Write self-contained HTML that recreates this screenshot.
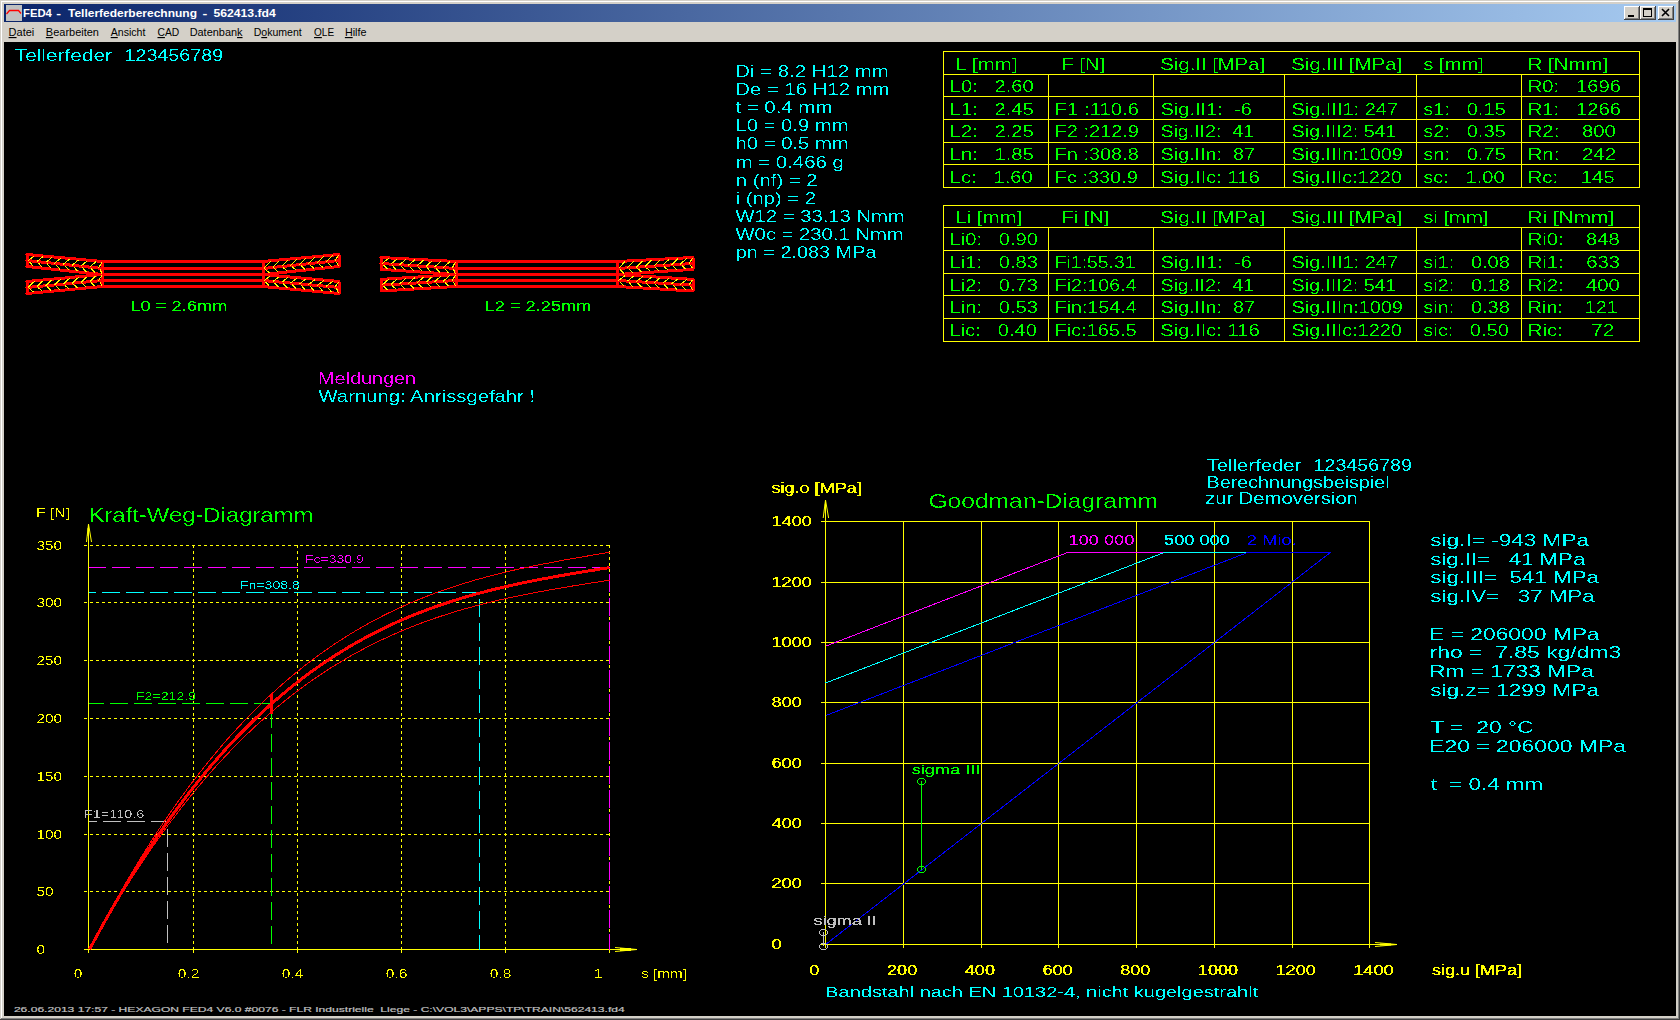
<!DOCTYPE html>
<html lang="de"><head><meta charset="utf-8"><title>FED4 - Tellerfederberechnung - 562413.fd4</title>
<style>
html,body{margin:0;padding:0;background:#d4d0c8;overflow:hidden}
svg{display:block;position:absolute;left:0;top:0}
text{font-family:"Liberation Sans",sans-serif;white-space:pre}
</style></head><body>
<svg width="1680" height="1020" viewBox="0 0 1680 1020" xml:space="preserve">

<defs><linearGradient id="tg" x1="0" x2="1" y1="0" y2="0"><stop offset="0" stop-color="#0a246a"/><stop offset="1" stop-color="#a6caf0"/></linearGradient></defs>
<rect x="0" y="0" width="1680" height="1020" fill="#d4d0c8"/>
<rect x="1" y="1" width="1677" height="1" fill="#ffffff"/><rect x="1" y="1" width="1" height="1017" fill="#ffffff"/>
<rect x="0" y="1019" width="1680" height="1" fill="#404040"/><rect x="1679" y="0" width="1" height="1020" fill="#404040"/>
<rect x="1" y="1018" width="1678" height="1" fill="#808080"/><rect x="1678" y="1" width="1" height="1018" fill="#808080"/>
<rect x="4" y="4" width="1672" height="18" fill="url(#tg)"/>
<rect x="6" y="5" width="16" height="16" fill="#c0c0c0"/>
<path d="M6.5,14 L9.5,10.5 H18.5 L21,13.5" stroke="#ff0000" stroke-width="1.3" fill="none"/>
<rect x="1624" y="6" width="16" height="14" fill="#404040"/>
<rect x="1624" y="6" width="15" height="13" fill="#ffffff"/>
<rect x="1625" y="7" width="14" height="12" fill="#808080"/>
<rect x="1625" y="7" width="13" height="11" fill="#d4d0c8"/>
<rect x="1640" y="6" width="16" height="14" fill="#404040"/>
<rect x="1640" y="6" width="15" height="13" fill="#ffffff"/>
<rect x="1641" y="7" width="14" height="12" fill="#808080"/>
<rect x="1641" y="7" width="13" height="11" fill="#d4d0c8"/>
<rect x="1658" y="6" width="16" height="14" fill="#404040"/>
<rect x="1658" y="6" width="15" height="13" fill="#ffffff"/>
<rect x="1659" y="7" width="14" height="12" fill="#808080"/>
<rect x="1659" y="7" width="13" height="11" fill="#d4d0c8"/>
<rect x="1628" y="15" width="6" height="2" fill="#000"/>
<rect x="1643.5" y="8.5" width="8" height="8" fill="none" stroke="#000" stroke-width="1"/><rect x="1643" y="8" width="9" height="2" fill="#000"/>
<path d="M1662,9 L1669,16 M1669,9 L1662,16" stroke="#000" stroke-width="1.6" fill="none"/>
<rect x="4" y="42" width="1672" height="974" fill="#000000"/>
<path d="M102.5,261.5 H263 M102.5,268.5 H263 M102.5,274.5 H263 M102.5,280.5 H263 M102.5,286.5 H263 M27,254.5 L102.5,261.5 M27,281.5 L102.5,274.5 M339,254.5 L263,261.5 M339,281.5 L263,274.5 M27,260.5 L102.5,268.5 M27,287.5 L102.5,280.5 M339,260.5 L263,268.5 M339,287.5 L263,280.5 M27,266.5 L102.5,274.5 M27,293.5 L102.5,286.5 M339,266.5 L263,274.5 M339,293.5 L263,286.5 M27,254.5 V266.5 M27,281.5 V293.5 M339,254.5 V266.5 M339,281.5 V293.5 M102.5,261.5 V286.5 M263,261.5 V286.5" stroke="#ff0000" stroke-width="3" fill="none" stroke-linecap="round" stroke-linejoin="round" shape-rendering="crispEdges"/>
<path d="M28.0,260.6 L34.5,255.7 M29.5,262.0 L33.5,266.4 M36.8,261.5 L43.3,256.5 M38.3,262.9 L42.3,267.3 M45.6,262.5 L52.1,257.3 M47.1,263.8 L51.1,268.3 M54.4,263.4 L60.9,258.1 M55.9,264.8 L59.9,269.2 M63.2,264.3 L69.8,259.0 M64.8,265.7 L68.8,270.1 M72.1,265.3 L78.6,259.8 M73.6,266.6 L77.6,271.1 M80.9,266.2 L87.4,260.6 M82.4,267.6 L86.4,272.0 M89.7,267.1 L96.2,261.4 M91.2,268.5 L95.2,272.9 M98.5,268.1 L102.0,262.0 M100.0,269.4 L102.0,273.6 M28.0,287.4 L34.5,281.3 M29.5,288.5 L33.5,292.1 M36.8,286.6 L43.3,280.5 M38.3,287.7 L42.3,291.3 M45.6,285.8 L52.1,279.7 M47.1,286.8 L51.1,290.5 M54.4,285.0 L60.9,278.9 M55.9,286.0 L59.9,289.6 M63.2,284.1 L69.8,278.0 M64.8,285.2 L68.8,288.8 M72.1,283.3 L78.6,277.2 M73.6,284.4 L77.6,288.0 M80.9,282.5 L87.4,276.4 M82.4,283.6 L86.4,287.2 M89.7,281.7 L96.2,275.6 M91.2,282.7 L95.2,286.4 M98.5,280.9 L102.0,275.0 M100.0,281.9 L102.0,285.7 M264.0,268.4 L270.5,261.3 M265.5,269.4 L269.5,273.0 M272.9,267.5 L279.4,260.5 M274.4,268.5 L278.4,272.1 M281.8,266.5 L288.2,259.7 M283.2,267.6 L287.2,271.1 M290.6,265.6 L297.1,258.9 M292.1,266.6 L296.1,270.2 M299.5,264.7 L306.0,258.0 M301.0,265.7 L305.0,269.3 M308.4,263.7 L314.9,257.2 M309.9,264.8 L313.9,268.3 M317.2,262.8 L323.8,256.4 M318.8,263.8 L322.8,267.4 M326.1,261.9 L332.6,255.6 M327.6,262.9 L331.6,266.5 M335.0,260.9 L338.5,255.0 M336.5,262.0 L338.5,265.8 M264.0,280.6 L270.5,275.7 M265.5,281.9 L269.5,286.3 M272.9,281.4 L279.4,276.5 M274.4,282.7 L278.4,287.1 M281.8,282.2 L288.2,277.3 M283.2,283.6 L287.2,287.9 M290.6,283.0 L297.1,278.1 M292.1,284.4 L296.1,288.8 M299.5,283.9 L306.0,279.0 M301.0,285.2 L305.0,289.6 M308.4,284.7 L314.9,279.8 M309.9,286.0 L313.9,290.4 M317.2,285.5 L323.8,280.6 M318.8,286.8 L322.8,291.2 M326.1,286.3 L332.6,281.4 M327.6,287.7 L331.6,292.0 M335.0,287.1 L338.5,282.0 M336.5,288.5 L338.5,292.7" stroke="#ffff00" stroke-width="1" fill="none" shape-rendering="crispEdges"/>
<path d="M456,261.5 H617.5 M456,268.5 H617.5 M456,274.5 H617.5 M456,280.5 H617.5 M456,286.5 H617.5 M381,257.5 L456,261.5 M381,279.4 L456,274.5 M693,257.5 L617.5,261.5 M693,279.4 L617.5,274.5 M381,263.5 L456,268.5 M381,285.2 L456,280.5 M693,263.5 L617.5,268.5 M693,285.2 L617.5,280.5 M381,269.3 L456,274.5 M381,291 L456,286.5 M693,269.3 L617.5,274.5 M693,291 L617.5,286.5 M381,257.5 V269.3 M381,279.4 V291 M693,257.5 V269.3 M693,279.4 V291 M456,261.5 V286.5 M617.5,261.5 V286.5" stroke="#ff0000" stroke-width="3" fill="none" stroke-linecap="round" stroke-linejoin="round" shape-rendering="crispEdges"/>
<path d="M382.0,263.6 L388.5,258.4 M383.5,264.9 L387.5,269.0 M390.8,264.1 L397.2,258.9 M392.2,265.4 L396.2,269.6 M399.5,264.7 L406.0,259.3 M401.0,266.0 L405.0,270.2 M408.2,265.3 L414.8,259.8 M409.8,266.6 L413.8,270.8 M417.0,265.9 L423.5,260.3 M418.5,267.2 L422.5,271.4 M425.8,266.5 L432.2,260.7 M427.2,267.8 L431.2,272.0 M434.5,267.1 L441.0,261.2 M436.0,268.4 L440.0,272.6 M443.2,267.6 L449.8,261.7 M444.8,268.9 L448.8,273.2 M452.0,268.2 L455.5,262.0 M453.5,269.5 L455.5,273.7 M382.0,285.1 L388.5,279.4 M383.5,286.2 L387.5,289.8 M390.8,284.6 L397.2,278.8 M392.2,285.7 L396.2,289.3 M399.5,284.0 L406.0,278.3 M401.0,285.1 L405.0,288.8 M408.2,283.5 L414.8,277.7 M409.8,284.6 L413.8,288.2 M417.0,282.9 L423.5,277.1 M418.5,284.1 L422.5,287.7 M425.8,282.4 L432.2,276.6 M427.2,283.5 L431.2,287.2 M434.5,281.8 L441.0,276.0 M436.0,283.0 L440.0,286.7 M443.2,281.3 L449.8,275.4 M444.8,282.4 L448.8,286.1 M452.0,280.8 L455.5,275.0 M453.5,281.9 L455.5,285.7 M618.5,268.4 L625.0,261.6 M620.0,269.5 L624.0,273.3 M627.3,267.9 L633.8,261.1 M628.8,269.0 L632.8,272.6 M636.1,267.3 L642.6,260.7 M637.6,268.4 L641.6,272.0 M644.9,266.7 L651.4,260.2 M646.4,267.8 L650.4,271.4 M653.8,266.1 L660.2,259.7 M655.2,267.2 L659.2,270.8 M662.6,265.5 L669.1,259.3 M664.1,266.6 L668.1,270.2 M671.4,264.9 L677.9,258.8 M672.9,266.0 L676.9,269.6 M680.2,264.3 L686.7,258.3 M681.7,265.4 L685.7,269.0 M689.0,263.8 L692.5,258.0 M690.5,264.9 L692.5,268.5 M618.5,280.6 L625.0,275.5 M620.0,281.9 L624.0,286.1 M627.3,281.1 L633.8,276.1 M628.8,282.4 L632.8,286.6 M636.1,281.7 L642.6,276.6 M637.6,283.0 L641.6,287.1 M644.9,282.2 L651.4,277.2 M646.4,283.5 L650.4,287.7 M653.8,282.8 L660.2,277.8 M655.2,284.1 L659.2,288.2 M662.6,283.3 L669.1,278.3 M664.1,284.6 L668.1,288.7 M671.4,283.9 L677.9,278.9 M672.9,285.1 L676.9,289.2 M680.2,284.4 L686.7,279.5 M681.7,285.7 L685.7,289.8 M689.0,285.0 L692.5,279.9 M690.5,286.2 L692.5,290.2" stroke="#ffff00" stroke-width="1" fill="none" shape-rendering="crispEdges"/>
<path d="M943.5,51.5 H1639.5 M943.5,74.5 H1639.5 M943.5,96.5 H1639.5 M943.5,119.5 H1639.5 M943.5,142.5 H1639.5 M943.5,164.5 H1639.5 M943.5,187.5 H1639.5 M943.5,51.5 V187.5 M1639.5,51.5 V187.5 M1048.5,74.5 V187.5 M1153.5,74.5 V187.5 M1284.5,74.5 V187.5 M1416.5,74.5 V187.5 M1521.5,74.5 V187.5" stroke="#ffff00" stroke-width="1" fill="none" shape-rendering="crispEdges" stroke-linecap="square"/>
<path d="M943.5,205.5 H1639.5 M943.5,227.5 H1639.5 M943.5,250.5 H1639.5 M943.5,273.5 H1639.5 M943.5,295.5 H1639.5 M943.5,318.5 H1639.5 M943.5,341.5 H1639.5 M943.5,205.5 V341.5 M1639.5,205.5 V341.5 M1048.5,227.5 V341.5 M1153.5,227.5 V341.5 M1284.5,227.5 V341.5 M1416.5,227.5 V341.5 M1521.5,227.5 V341.5" stroke="#ffff00" stroke-width="1" fill="none" shape-rendering="crispEdges" stroke-linecap="square"/>
<path d="M84,891.5 H610 M84,834.5 H610 M84,776.5 H610 M84,718.5 H610 M84,660.5 H610 M84,602.5 H610 M84,545.5 H610" stroke="#ffff00" stroke-width="1" fill="none" stroke-dasharray="3 3" shape-rendering="crispEdges"/>
<path d="M193.5,545 V953 M297.5,545 V953 M401.5,545 V953 M505.5,545 V953 M609.5,545 V953" stroke="#ffff00" stroke-width="1" fill="none" stroke-dasharray="3 3" shape-rendering="crispEdges"/>
<path d="M193.5,949 V953 M297.5,949 V953 M401.5,949 V953 M505.5,949 V953 M609.5,949 V953" stroke="#ffff00" stroke-width="1" fill="none" shape-rendering="crispEdges"/>
<path d="M88.5,524 V953 M84,949.5 H637" stroke="#ffff00" stroke-width="1" fill="none" shape-rendering="crispEdges"/>
<path d="M88.5,524 L86.5,542 M88.5,524 L91.5,542 M88,528 V536" stroke="#ffff00" stroke-width="1" fill="none" />
<path d="M637,949.5 L615,947.5 M637,949.5 L615,951.5 M620,949.5 H632" stroke="#ffff00" stroke-width="1" fill="none" /><path d="M620,949.5 H631" stroke="#ffff00" stroke-width="3" fill="none" />
<path d="M89,567.5 H609.5 V949.5" stroke="#ff00ff" stroke-width="1" fill="none" stroke-dasharray="18 6" stroke-dashoffset="1" shape-rendering="crispEdges"/>
<path d="M89,592.5 H479.5 V949.5" stroke="#00ffff" stroke-width="1" fill="none" stroke-dasharray="18 6" stroke-dashoffset="11" shape-rendering="crispEdges"/>
<path d="M89,703.5 H271.5 V949.5" stroke="#00ff00" stroke-width="1" fill="none" stroke-dasharray="18 6" stroke-dashoffset="3" shape-rendering="crispEdges"/>
<path d="M89,821.5 H167.5 V949.5" stroke="#c0c0c0" stroke-width="1" fill="none" stroke-dasharray="18 6" stroke-dashoffset="10" shape-rendering="crispEdges"/>
<polyline points="89.5,949.5 94.7,939.4 99.9,929.5 105.1,919.8 110.3,910.3 115.5,900.9 120.7,891.7 125.9,882.7 131.1,873.9 136.3,865.2 141.5,856.7 146.7,848.4 151.9,840.2 157.1,832.2 162.3,824.4 167.5,816.7 172.7,809.2 177.9,801.8 183.1,794.6 188.3,787.6 193.5,780.7 198.7,773.9 203.9,767.3 209.1,760.9 214.3,754.6 219.5,748.4 224.7,742.3 229.9,736.4 235.1,730.7 240.3,725.1 245.5,719.6 250.7,714.2 255.9,709.0 261.1,703.8 266.3,698.9 271.5,694.0 276.7,689.3 281.9,684.6 287.1,680.1 292.3,675.7 297.5,671.5 302.7,667.3 307.9,663.2 313.1,659.3 318.3,655.5 323.5,651.7 328.7,648.1 333.9,644.5 339.1,641.1 344.3,637.8 349.5,634.5 354.7,631.4 359.9,628.3 365.1,625.4 370.3,622.5 375.5,619.7 380.7,617.0 385.9,614.3 391.1,611.8 396.3,609.3 401.5,606.9 406.7,604.6 411.9,602.3 417.1,600.2 422.3,598.1 427.5,596.0 432.7,594.0 437.9,592.1 443.1,590.3 448.3,588.5 453.5,586.7 458.7,585.1 463.9,583.4 469.1,581.9 474.3,580.3 479.5,578.9 484.7,577.4 489.9,576.1 495.1,574.7 500.3,573.4 505.5,572.2 510.7,570.9 515.9,569.7 521.1,568.6 526.3,567.5 531.5,566.4 536.7,565.3 541.9,564.3 547.1,563.3 552.3,562.3 557.5,561.3 562.7,560.3 567.9,559.4 573.1,558.5 578.3,557.6 583.5,556.7 588.7,555.8 593.9,554.9 599.1,554.0 604.3,553.2 609.5,552.3" stroke="#ff0000" stroke-width="1" fill="none" shape-rendering="crispEdges"/>
<polyline points="89.5,949.5 94.7,940.1 99.9,930.9 105.1,921.9 110.3,913.0 115.5,904.3 120.7,895.8 125.9,887.4 131.1,879.2 136.3,871.1 141.5,863.2 146.7,855.5 151.9,847.9 157.1,840.5 162.3,833.2 167.5,826.0 172.7,819.1 177.9,812.2 183.1,805.5 188.3,799.0 193.5,792.5 198.7,786.3 203.9,780.1 209.1,774.1 214.3,768.2 219.5,762.5 224.7,756.9 229.9,751.4 235.1,746.0 240.3,740.8 245.5,735.7 250.7,730.7 255.9,725.8 261.1,721.1 266.3,716.5 271.5,711.9 276.7,707.5 281.9,703.2 287.1,699.0 292.3,695.0 297.5,691.0 302.7,687.1 307.9,683.3 313.1,679.7 318.3,676.1 323.5,672.6 328.7,669.2 333.9,666.0 339.1,662.8 344.3,659.7 349.5,656.6 354.7,653.7 359.9,650.9 365.1,648.1 370.3,645.4 375.5,642.8 380.7,640.3 385.9,637.9 391.1,635.5 396.3,633.2 401.5,631.0 406.7,628.8 411.9,626.7 417.1,624.7 422.3,622.7 427.5,620.8 432.7,619.0 437.9,617.2 443.1,615.5 448.3,613.8 453.5,612.2 458.7,610.6 463.9,609.1 469.1,607.7 474.3,606.3 479.5,604.9 484.7,603.6 489.9,602.3 495.1,601.0 500.3,599.8 505.5,598.6 510.7,597.5 515.9,596.4 521.1,595.3 526.3,594.3 531.5,593.3 536.7,592.3 541.9,591.3 547.1,590.4 552.3,589.4 557.5,588.5 562.7,587.7 567.9,586.8 573.1,585.9 578.3,585.1 583.5,584.3 588.7,583.4 593.9,582.6 599.1,581.8 604.3,581.0 609.5,580.2" stroke="#ff0000" stroke-width="1" fill="none" shape-rendering="crispEdges"/>
<polyline points="89.5,949.5 94.7,939.8 99.9,930.3 105.1,920.9 110.3,911.8 115.5,902.8 120.7,893.9 125.9,885.3 131.1,876.8 136.3,868.5 141.5,860.3 146.7,852.3 151.9,844.4 157.1,836.7 162.3,829.2 167.5,821.8 172.7,814.6 177.9,807.5 183.1,800.6 188.3,793.8 193.5,787.2 198.7,780.7 203.9,774.3 209.1,768.1 214.3,762.1 219.5,756.1 224.7,750.3 229.9,744.6 235.1,739.1 240.3,733.7 245.5,728.4 250.7,723.2 255.9,718.2 261.1,713.3 266.3,708.5 271.5,703.8 276.7,699.3 281.9,694.8 287.1,690.5 292.3,686.3 297.5,682.2 302.7,678.1 307.9,674.2 313.1,670.5 318.3,666.8 323.5,663.2 328.7,659.7 333.9,656.3 339.1,653.0 344.3,649.8 349.5,646.6 354.7,643.6 359.9,640.7 365.1,637.8 370.3,635.0 375.5,632.4 380.7,629.8 385.9,627.2 391.1,624.8 396.3,622.4 401.5,620.1 406.7,617.9 411.9,615.7 417.1,613.6 422.3,611.6 427.5,609.6 432.7,607.7 437.9,605.9 443.1,604.1 448.3,602.4 453.5,600.7 458.7,599.1 463.9,597.5 469.1,596.0 474.3,594.5 479.5,593.1 484.7,591.8 489.9,590.4 495.1,589.1 500.3,587.9 505.5,586.7 510.7,585.5 515.9,584.4 521.1,583.2 526.3,582.2 531.5,581.1 536.7,580.1 541.9,579.1 547.1,578.1 552.3,577.2 557.5,576.2 562.7,575.3 567.9,574.4 573.1,573.5 578.3,572.7 583.5,571.8 588.7,570.9 593.9,570.1 599.1,569.2 604.3,568.4 609.5,567.6" stroke="#ff0000" stroke-width="3" fill="none" shape-rendering="crispEdges"/>
<line x1="271.50" y1="693.50" x2="271.50" y2="713.50" stroke="#ff0000" stroke-width="3" shape-rendering="crispEdges"/>
<path d="M825.5,500 V948 M821,944.5 H1397 M903.5,521 V948 M821,883.5 H1370 M981.5,521 V948 M821,823.5 H1370 M1058.5,521 V948 M821,763.5 H1370 M1136.5,521 V948 M821,702.5 H1370 M1214.5,521 V948 M821,642.5 H1370 M1292.5,521 V948 M821,582.5 H1370 M1369.5,521 V948 M821,521.5 H1370" stroke="#ffff00" stroke-width="1" fill="none" shape-rendering="crispEdges"/>
<path d="M825.5,500 L823.2,518 M825.5,500 L828.6,518 M825.3,504 V513" stroke="#ffff00" stroke-width="1" fill="none" />
<path d="M1397,944.5 L1375,942.5 M1397,944.5 L1375,946.5" stroke="#ffff00" stroke-width="1" fill="none" /><path d="M1380,944.5 H1391" stroke="#ffff00" stroke-width="2" fill="none" />
<path d="M825.6,646.25 L1067.5,552.5 H1164.25" stroke="#ff00ff" stroke-width="1" fill="none" shape-rendering="crispEdges"/>
<path d="M825.6,683 L1164.25,552.5 H1247.5" stroke="#00ffff" stroke-width="1" fill="none" shape-rendering="crispEdges"/>
<path d="M825.6,715.6 L1247.5,552.5 H1330.3 L825.6,944.5" stroke="#0000ff" stroke-width="1" fill="none" shape-rendering="crispEdges"/>
<line x1="921.50" y1="781.04" x2="921.50" y2="869.87" stroke="#00ff00" stroke-width="1" shape-rendering="crispEdges"/>
<ellipse cx="921.5" cy="781.5" rx="4" ry="3" stroke-width="1" shape-rendering="crispEdges" stroke="#00ff00" fill="none"/>
<ellipse cx="921.5" cy="869.5" rx="4" ry="3" stroke-width="1" shape-rendering="crispEdges" stroke="#00ff00" fill="none"/>
<line x1="823.50" y1="932.11" x2="823.50" y2="946.31" stroke="#c0c0c0" stroke-width="1" shape-rendering="crispEdges"/>
<ellipse cx="823.5" cy="932.5" rx="4" ry="3" stroke-width="1" shape-rendering="crispEdges" stroke="#c0c0c0" fill="none"/>
<ellipse cx="823.5" cy="946.5" rx="4" ry="3" stroke-width="1" shape-rendering="crispEdges" stroke="#c0c0c0" fill="none"/>
<g id="texts">
<defs><filter id="t52" filterUnits="userSpaceOnUse" x="0" y="40" width="1680" height="980" color-interpolation-filters="sRGB"><feComponentTransfer><feFuncA type="discrete" tableValues="0 0 0 0 0 0 0 0 0 0 1 1 1 1 1 1 1 1 1 1"/></feComponentTransfer></filter><filter id="t55" filterUnits="userSpaceOnUse" x="0" y="40" width="1680" height="980" color-interpolation-filters="sRGB"><feComponentTransfer><feFuncA type="discrete" tableValues="0 0 0 0 0 0 0 0 0 0 0 1 1 1 1 1 1 1 1 1"/></feComponentTransfer></filter><filter id="t60" filterUnits="userSpaceOnUse" x="0" y="40" width="1680" height="980" color-interpolation-filters="sRGB"><feComponentTransfer><feFuncA type="discrete" tableValues="0 0 0 0 0 0 0 0 0 0 0 0 1 1 1 1 1 1 1 1"/></feComponentTransfer></filter></defs>
<g filter="url(#t52)">
<text x="1430.32" y="545.90" font-size="17.2" fill="#00ffff" textLength="158.71" lengthAdjust="spacingAndGlyphs">sig.I= -943 MPa</text>
<text x="1430.33" y="564.65" font-size="17.2" fill="#00ffff" textLength="154.98" lengthAdjust="spacingAndGlyphs">sig.II=   41 MPa</text>
<text x="1430.33" y="583.40" font-size="17.2" fill="#00ffff" textLength="168.71" lengthAdjust="spacingAndGlyphs">sig.III=  541 MPa</text>
<text x="1430.33" y="602.15" font-size="17.2" fill="#00ffff" textLength="164.37" lengthAdjust="spacingAndGlyphs">sig.IV=   37 MPa</text>
<text x="1429.18" y="639.65" font-size="17.2" fill="#00ffff" textLength="170.39" lengthAdjust="spacingAndGlyphs">E = 206000 MPa</text>
<text x="1429.51" y="658.40" font-size="17.2" fill="#00ffff" textLength="191.85" lengthAdjust="spacingAndGlyphs">rho =  7.85 kg/dm3</text>
<text x="1429.18" y="677.15" font-size="17.2" fill="#00ffff" textLength="164.70" lengthAdjust="spacingAndGlyphs">Rm = 1733 MPa</text>
<text x="1430.32" y="695.90" font-size="17.2" fill="#00ffff" textLength="168.72" lengthAdjust="spacingAndGlyphs">sig.z= 1299 MPa</text>
<text x="1430.43" y="733.40" font-size="17.2" fill="#00ffff" textLength="103.24" lengthAdjust="spacingAndGlyphs">T =  20 °C</text>
<text x="1429.17" y="752.15" font-size="17.2" fill="#00ffff" textLength="196.83" lengthAdjust="spacingAndGlyphs">E20 = 206000 MPa</text>
<text x="1430.66" y="789.65" font-size="17.2" fill="#00ffff" textLength="112.38" lengthAdjust="spacingAndGlyphs">t  = 0.4 mm</text>
</g>
<g filter="url(#t55)">
<text x="14.78" y="61.00" font-size="17.2" fill="#00ffff" textLength="97.12" lengthAdjust="spacingAndGlyphs">Tellerfeder</text>
<text x="124.42" y="61.00" font-size="17.2" fill="#00ffff" textLength="98.88" lengthAdjust="spacingAndGlyphs">123456789</text>
<text x="735.37" y="77.00" font-size="17.2" fill="#00ffff" textLength="153.26" lengthAdjust="spacingAndGlyphs">Di = 8.2 H12 mm</text>
<text x="735.37" y="95.10" font-size="17.2" fill="#00ffff" textLength="154.18" lengthAdjust="spacingAndGlyphs">De = 16 H12 mm</text>
<text x="735.29" y="113.20" font-size="17.2" fill="#00ffff" textLength="97.17" lengthAdjust="spacingAndGlyphs">t = 0.4 mm</text>
<text x="735.38" y="131.30" font-size="17.2" fill="#00ffff" textLength="113.26" lengthAdjust="spacingAndGlyphs">L0 = 0.9 mm</text>
<text x="735.58" y="149.40" font-size="17.2" fill="#00ffff" textLength="113.05" lengthAdjust="spacingAndGlyphs">h0 = 0.5 mm</text>
<text x="735.68" y="167.50" font-size="17.2" fill="#00ffff" textLength="108.13" lengthAdjust="spacingAndGlyphs">m = 0.466 g</text>
<text x="735.68" y="185.60" font-size="17.2" fill="#00ffff" textLength="81.99" lengthAdjust="spacingAndGlyphs">n (nf) = 2</text>
<text x="735.69" y="203.70" font-size="17.2" fill="#00ffff" textLength="80.35" lengthAdjust="spacingAndGlyphs">i (np) = 2</text>
<text x="735.50" y="221.80" font-size="17.2" fill="#00ffff" textLength="169.20" lengthAdjust="spacingAndGlyphs">W12 = 33.13 Nmm</text>
<text x="735.50" y="239.90" font-size="17.2" fill="#00ffff" textLength="168.18" lengthAdjust="spacingAndGlyphs">W0c = 230.1 Nmm</text>
<text x="735.71" y="258.00" font-size="17.2" fill="#00ffff" textLength="140.76" lengthAdjust="spacingAndGlyphs">pn = 2.083 MPa</text>
<text x="955.66" y="69.50" font-size="17.4" fill="#00ff00" textLength="62.01" lengthAdjust="spacingAndGlyphs">L [mm]</text>
<text x="1061.43" y="69.50" font-size="17.4" fill="#00ff00" textLength="43.76" lengthAdjust="spacingAndGlyphs">F [N]</text>
<text x="1160.39" y="69.50" font-size="17.4" fill="#00ff00" textLength="104.85" lengthAdjust="spacingAndGlyphs">Sig.II [MPa]</text>
<text x="1291.38" y="69.50" font-size="17.4" fill="#00ff00" textLength="110.82" lengthAdjust="spacingAndGlyphs">Sig.III [MPa]</text>
<text x="1423.19" y="69.50" font-size="17.4" fill="#00ff00" textLength="60.78" lengthAdjust="spacingAndGlyphs">s [mm]</text>
<text x="1527.67" y="69.50" font-size="17.4" fill="#00ff00" textLength="80.53" lengthAdjust="spacingAndGlyphs">R [Nmm]</text>
<text x="949.69" y="92.12" font-size="17.4" fill="#00ff00" textLength="84.12" lengthAdjust="spacingAndGlyphs">L0:   2.60</text>
<text x="1527.68" y="92.12" font-size="17.4" fill="#00ff00" textLength="93.21" lengthAdjust="spacingAndGlyphs">R0:   1696</text>
<text x="949.69" y="114.74" font-size="17.4" fill="#00ff00" textLength="84.12" lengthAdjust="spacingAndGlyphs">L1:   2.45</text>
<text x="1054.68" y="114.74" font-size="17.4" fill="#00ff00" textLength="84.26" lengthAdjust="spacingAndGlyphs">F1 :110.6</text>
<text x="1160.40" y="114.74" font-size="17.4" fill="#00ff00" textLength="91.56" lengthAdjust="spacingAndGlyphs">Sig.II1:  -6</text>
<text x="1291.40" y="114.74" font-size="17.4" fill="#00ff00" textLength="106.64" lengthAdjust="spacingAndGlyphs">Sig.III1: 247</text>
<text x="1423.20" y="114.74" font-size="17.4" fill="#00ff00" textLength="82.58" lengthAdjust="spacingAndGlyphs">s1:   0.15</text>
<text x="1527.68" y="114.74" font-size="17.4" fill="#00ff00" textLength="93.21" lengthAdjust="spacingAndGlyphs">R1:   1266</text>
<text x="949.69" y="137.36" font-size="17.4" fill="#00ff00" textLength="84.12" lengthAdjust="spacingAndGlyphs">L2:   2.25</text>
<text x="1054.71" y="137.36" font-size="17.4" fill="#00ff00" textLength="84.19" lengthAdjust="spacingAndGlyphs">F2 :212.9</text>
<text x="1160.42" y="137.36" font-size="17.4" fill="#00ff00" textLength="93.57" lengthAdjust="spacingAndGlyphs">Sig.II2:  41</text>
<text x="1291.41" y="137.36" font-size="17.4" fill="#00ff00" textLength="105.11" lengthAdjust="spacingAndGlyphs">Sig.III2: 541</text>
<text x="1423.20" y="137.36" font-size="17.4" fill="#00ff00" textLength="82.58" lengthAdjust="spacingAndGlyphs">s2:   0.35</text>
<text x="1527.67" y="137.36" font-size="17.4" fill="#00ff00" textLength="88.16" lengthAdjust="spacingAndGlyphs">R2:    800</text>
<text x="949.69" y="159.98" font-size="17.4" fill="#00ff00" textLength="84.12" lengthAdjust="spacingAndGlyphs">Ln:   1.85</text>
<text x="1054.71" y="159.98" font-size="17.4" fill="#00ff00" textLength="84.09" lengthAdjust="spacingAndGlyphs">Fn :308.8</text>
<text x="1160.41" y="159.98" font-size="17.4" fill="#00ff00" textLength="94.60" lengthAdjust="spacingAndGlyphs">Sig.IIn:  87</text>
<text x="1291.41" y="159.98" font-size="17.4" fill="#00ff00" textLength="111.49" lengthAdjust="spacingAndGlyphs">Sig.IIIn:1009</text>
<text x="1423.20" y="159.98" font-size="17.4" fill="#00ff00" textLength="82.58" lengthAdjust="spacingAndGlyphs">sn:   0.75</text>
<text x="1527.67" y="159.98" font-size="17.4" fill="#00ff00" textLength="88.37" lengthAdjust="spacingAndGlyphs">Rn:    242</text>
<text x="949.68" y="182.60" font-size="17.4" fill="#00ff00" textLength="83.10" lengthAdjust="spacingAndGlyphs">Lc:   1.60</text>
<text x="1054.70" y="182.60" font-size="17.4" fill="#00ff00" textLength="83.17" lengthAdjust="spacingAndGlyphs">Fc :330.9</text>
<text x="1160.39" y="182.60" font-size="17.4" fill="#00ff00" textLength="99.24" lengthAdjust="spacingAndGlyphs">Sig.IIc: 116</text>
<text x="1291.41" y="182.60" font-size="17.4" fill="#00ff00" textLength="110.37" lengthAdjust="spacingAndGlyphs">Sig.IIIc:1220</text>
<text x="1423.20" y="182.60" font-size="17.4" fill="#00ff00" textLength="81.43" lengthAdjust="spacingAndGlyphs">sc:   1.00</text>
<text x="1527.68" y="182.60" font-size="17.4" fill="#00ff00" textLength="86.88" lengthAdjust="spacingAndGlyphs">Rc:    145</text>
<text x="955.68" y="222.80" font-size="17.4" fill="#00ff00" textLength="66.57" lengthAdjust="spacingAndGlyphs">Li [mm]</text>
<text x="1061.44" y="222.80" font-size="17.4" fill="#00ff00" textLength="48.00" lengthAdjust="spacingAndGlyphs">Fi [N]</text>
<text x="1160.39" y="222.80" font-size="17.4" fill="#00ff00" textLength="104.85" lengthAdjust="spacingAndGlyphs">Sig.II [MPa]</text>
<text x="1291.38" y="222.80" font-size="17.4" fill="#00ff00" textLength="110.82" lengthAdjust="spacingAndGlyphs">Sig.III [MPa]</text>
<text x="1423.19" y="222.80" font-size="17.4" fill="#00ff00" textLength="65.23" lengthAdjust="spacingAndGlyphs">si [mm]</text>
<text x="1527.64" y="222.80" font-size="17.4" fill="#00ff00" textLength="86.33" lengthAdjust="spacingAndGlyphs">Ri [Nmm]</text>
<text x="949.69" y="245.42" font-size="17.4" fill="#00ff00" textLength="88.15" lengthAdjust="spacingAndGlyphs">Li0:   0.90</text>
<text x="1527.68" y="245.42" font-size="17.4" fill="#00ff00" textLength="92.19" lengthAdjust="spacingAndGlyphs">Ri0:    848</text>
<text x="949.69" y="268.04" font-size="17.4" fill="#00ff00" textLength="88.25" lengthAdjust="spacingAndGlyphs">Li1:   0.83</text>
<text x="1054.75" y="268.04" font-size="17.4" fill="#00ff00" textLength="80.71" lengthAdjust="spacingAndGlyphs">Fi1:55.31</text>
<text x="1160.40" y="268.04" font-size="17.4" fill="#00ff00" textLength="91.56" lengthAdjust="spacingAndGlyphs">Sig.II1:  -6</text>
<text x="1291.40" y="268.04" font-size="17.4" fill="#00ff00" textLength="106.64" lengthAdjust="spacingAndGlyphs">Sig.III1: 247</text>
<text x="1423.20" y="268.04" font-size="17.4" fill="#00ff00" textLength="86.62" lengthAdjust="spacingAndGlyphs">si1:   0.08</text>
<text x="1527.68" y="268.04" font-size="17.4" fill="#00ff00" textLength="92.29" lengthAdjust="spacingAndGlyphs">Ri1:    633</text>
<text x="949.69" y="290.66" font-size="17.4" fill="#00ff00" textLength="88.25" lengthAdjust="spacingAndGlyphs">Li2:   0.73</text>
<text x="1054.73" y="290.66" font-size="17.4" fill="#00ff00" textLength="81.85" lengthAdjust="spacingAndGlyphs">Fi2:106.4</text>
<text x="1160.42" y="290.66" font-size="17.4" fill="#00ff00" textLength="93.57" lengthAdjust="spacingAndGlyphs">Sig.II2:  41</text>
<text x="1291.41" y="290.66" font-size="17.4" fill="#00ff00" textLength="105.11" lengthAdjust="spacingAndGlyphs">Sig.III2: 541</text>
<text x="1423.20" y="290.66" font-size="17.4" fill="#00ff00" textLength="86.62" lengthAdjust="spacingAndGlyphs">si2:   0.18</text>
<text x="1527.68" y="290.66" font-size="17.4" fill="#00ff00" textLength="92.19" lengthAdjust="spacingAndGlyphs">Ri2:    400</text>
<text x="949.69" y="313.28" font-size="17.4" fill="#00ff00" textLength="88.25" lengthAdjust="spacingAndGlyphs">Lin:   0.53</text>
<text x="1054.73" y="313.28" font-size="17.4" fill="#00ff00" textLength="81.85" lengthAdjust="spacingAndGlyphs">Fin:154.4</text>
<text x="1160.41" y="313.28" font-size="17.4" fill="#00ff00" textLength="94.60" lengthAdjust="spacingAndGlyphs">Sig.IIn:  87</text>
<text x="1291.41" y="313.28" font-size="17.4" fill="#00ff00" textLength="111.49" lengthAdjust="spacingAndGlyphs">Sig.IIIn:1009</text>
<text x="1423.20" y="313.28" font-size="17.4" fill="#00ff00" textLength="86.62" lengthAdjust="spacingAndGlyphs">sin:   0.38</text>
<text x="1527.72" y="313.28" font-size="17.4" fill="#00ff00" textLength="90.08" lengthAdjust="spacingAndGlyphs">Rin:    121</text>
<text x="949.69" y="335.90" font-size="17.4" fill="#00ff00" textLength="87.13" lengthAdjust="spacingAndGlyphs">Lic:   0.40</text>
<text x="1054.71" y="335.90" font-size="17.4" fill="#00ff00" textLength="81.85" lengthAdjust="spacingAndGlyphs">Fic:165.5</text>
<text x="1160.39" y="335.90" font-size="17.4" fill="#00ff00" textLength="99.24" lengthAdjust="spacingAndGlyphs">Sig.IIc: 116</text>
<text x="1291.41" y="335.90" font-size="17.4" fill="#00ff00" textLength="110.37" lengthAdjust="spacingAndGlyphs">Sig.IIIc:1220</text>
<text x="1423.20" y="335.90" font-size="17.4" fill="#00ff00" textLength="85.60" lengthAdjust="spacingAndGlyphs">sic:   0.50</text>
<text x="1527.66" y="335.90" font-size="17.4" fill="#00ff00" textLength="86.43" lengthAdjust="spacingAndGlyphs">Ric:     72</text>
<text x="130.44" y="311.00" font-size="14.5" fill="#00ff00" textLength="97.06" lengthAdjust="spacingAndGlyphs" stroke="#00ff00" stroke-width="0.2">L0 = 2.6mm</text>
<text x="484.54" y="311.00" font-size="14.5" fill="#00ff00" textLength="106.97" lengthAdjust="spacingAndGlyphs" stroke="#00ff00" stroke-width="0.2">L2 = 2.25mm</text>
<text x="318.12" y="384.00" font-size="17.2" fill="#ff00ff" textLength="97.83" lengthAdjust="spacingAndGlyphs">Meldungen</text>
<text x="318.50" y="402.00" font-size="17.2" fill="#00ffff" textLength="216.64" lengthAdjust="spacingAndGlyphs">Warnung: Anrissgefahr !</text>
<text x="771.46" y="492.50" font-size="13.8" fill="#ffff00" textLength="90.34" lengthAdjust="spacingAndGlyphs" stroke="#ffff00" stroke-width="0.25">sig.o [MPa]</text>
<text x="771.55" y="949.00" font-size="13.8" fill="#ffff00" textLength="10.10" lengthAdjust="spacingAndGlyphs" stroke="#ffff00" stroke-width="0.25">0</text>
<text x="809.35" y="975.20" font-size="13.8" fill="#ffff00" textLength="10.10" lengthAdjust="spacingAndGlyphs" stroke="#ffff00" stroke-width="0.25">0</text>
<text x="771.54" y="888.00" font-size="13.8" fill="#ffff00" textLength="30.29" lengthAdjust="spacingAndGlyphs" stroke="#ffff00" stroke-width="0.25">200</text>
<text x="887.04" y="975.20" font-size="13.8" fill="#ffff00" textLength="30.29" lengthAdjust="spacingAndGlyphs" stroke="#ffff00" stroke-width="0.25">200</text>
<text x="771.57" y="828.00" font-size="13.8" fill="#ffff00" textLength="30.29" lengthAdjust="spacingAndGlyphs" stroke="#ffff00" stroke-width="0.25">400</text>
<text x="964.77" y="975.20" font-size="13.8" fill="#ffff00" textLength="30.29" lengthAdjust="spacingAndGlyphs" stroke="#ffff00" stroke-width="0.25">400</text>
<text x="771.54" y="768.00" font-size="13.8" fill="#ffff00" textLength="30.29" lengthAdjust="spacingAndGlyphs" stroke="#ffff00" stroke-width="0.25">600</text>
<text x="1042.44" y="975.20" font-size="13.8" fill="#ffff00" textLength="30.29" lengthAdjust="spacingAndGlyphs" stroke="#ffff00" stroke-width="0.25">600</text>
<text x="771.55" y="707.00" font-size="13.8" fill="#ffff00" textLength="30.29" lengthAdjust="spacingAndGlyphs" stroke="#ffff00" stroke-width="0.25">800</text>
<text x="1120.15" y="975.20" font-size="13.8" fill="#ffff00" textLength="30.29" lengthAdjust="spacingAndGlyphs" stroke="#ffff00" stroke-width="0.25">800</text>
<text x="771.51" y="647.00" font-size="13.8" fill="#ffff00" textLength="40.39" lengthAdjust="spacingAndGlyphs" stroke="#ffff00" stroke-width="0.25">1000</text>
<text x="1197.81" y="975.20" font-size="13.8" fill="#ffff00" textLength="40.39" lengthAdjust="spacingAndGlyphs" stroke="#ffff00" stroke-width="0.25">1000</text>
<text x="771.51" y="587.00" font-size="13.8" fill="#ffff00" textLength="40.39" lengthAdjust="spacingAndGlyphs" stroke="#ffff00" stroke-width="0.25">1200</text>
<text x="1275.51" y="975.20" font-size="13.8" fill="#ffff00" textLength="40.39" lengthAdjust="spacingAndGlyphs" stroke="#ffff00" stroke-width="0.25">1200</text>
<text x="771.51" y="526.00" font-size="13.8" fill="#ffff00" textLength="40.39" lengthAdjust="spacingAndGlyphs" stroke="#ffff00" stroke-width="0.25">1400</text>
<text x="1353.21" y="975.20" font-size="13.8" fill="#ffff00" textLength="40.39" lengthAdjust="spacingAndGlyphs" stroke="#ffff00" stroke-width="0.25">1400</text>
<text x="1431.96" y="975.20" font-size="13.8" fill="#ffff00" textLength="89.93" lengthAdjust="spacingAndGlyphs" stroke="#ffff00" stroke-width="0.25">sig.u [MPa]</text>
<text x="1068.64" y="545.00" font-size="14.5" fill="#ff00ff" textLength="65.61" lengthAdjust="spacingAndGlyphs" stroke="#ff00ff" stroke-width="0.2">100 000</text>
<text x="1164.02" y="545.00" font-size="14.5" fill="#00ffff" textLength="65.92" lengthAdjust="spacingAndGlyphs" stroke="#00ffff" stroke-width="0.2">500 000</text>
<text x="1246.88" y="545.00" font-size="14.5" fill="#0000ff" textLength="49.89" lengthAdjust="spacingAndGlyphs" stroke="#0000ff" stroke-width="0.2">2 Mio.</text>
<text x="1206.69" y="471.00" font-size="15.6" fill="#00ffff" textLength="94.49" lengthAdjust="spacingAndGlyphs" stroke="#00ffff" stroke-width="0.05">Tellerfeder</text>
<text x="1313.52" y="471.00" font-size="15.6" fill="#00ffff" textLength="98.47" lengthAdjust="spacingAndGlyphs" stroke="#00ffff" stroke-width="0.05">123456789</text>
<text x="1206.52" y="488.00" font-size="15.6" fill="#00ffff" textLength="183.15" lengthAdjust="spacingAndGlyphs" stroke="#00ffff" stroke-width="0.05">Berechnungsbeispiel</text>
<text x="1205.09" y="504.00" font-size="15.6" fill="#00ffff" textLength="152.79" lengthAdjust="spacingAndGlyphs" stroke="#00ffff" stroke-width="0.05">zur Demoversion</text>
<text x="911.70" y="773.75" font-size="13.4" fill="#00ff00" textLength="68.67" lengthAdjust="spacingAndGlyphs" stroke="#00ff00" stroke-width="0.2">sigma III</text>
<text x="813.46" y="924.60" font-size="13.4" fill="#c0c0c0" textLength="63.47" lengthAdjust="spacingAndGlyphs" stroke="#c0c0c0" stroke-width="0.2">sigma II</text>
<text x="825.30" y="997.00" font-size="15.2" fill="#00ffff" textLength="432.82" lengthAdjust="spacingAndGlyphs" stroke="#00ffff" stroke-width="0.05">Bandstahl nach EN 10132-4, nicht kugelgestrahlt</text>
</g>
<g filter="url(#t60)">
<text x="35.94" y="517.20" font-size="12.7" fill="#ffff00" textLength="34.13" lengthAdjust="spacingAndGlyphs">F [N]</text>
<text x="36.40" y="954.00" font-size="12.7" fill="#ffff00" textLength="8.58" lengthAdjust="spacingAndGlyphs">0</text>
<text x="36.40" y="896.00" font-size="12.7" fill="#ffff00" textLength="17.16" lengthAdjust="spacingAndGlyphs">50</text>
<text x="36.40" y="839.00" font-size="12.7" fill="#ffff00" textLength="25.74" lengthAdjust="spacingAndGlyphs">100</text>
<text x="36.40" y="781.00" font-size="12.7" fill="#ffff00" textLength="25.74" lengthAdjust="spacingAndGlyphs">150</text>
<text x="36.40" y="723.00" font-size="12.7" fill="#ffff00" textLength="25.74" lengthAdjust="spacingAndGlyphs">200</text>
<text x="36.40" y="665.00" font-size="12.7" fill="#ffff00" textLength="25.74" lengthAdjust="spacingAndGlyphs">250</text>
<text x="36.40" y="607.00" font-size="12.7" fill="#ffff00" textLength="25.74" lengthAdjust="spacingAndGlyphs">300</text>
<text x="36.40" y="550.00" font-size="12.7" fill="#ffff00" textLength="25.74" lengthAdjust="spacingAndGlyphs">350</text>
<text x="73.80" y="977.50" font-size="12.7" fill="#ffff00" textLength="8.58" lengthAdjust="spacingAndGlyphs">0</text>
<text x="177.80" y="977.50" font-size="12.7" fill="#ffff00" textLength="21.45" lengthAdjust="spacingAndGlyphs">0.2</text>
<text x="281.80" y="977.50" font-size="12.7" fill="#ffff00" textLength="21.45" lengthAdjust="spacingAndGlyphs">0.4</text>
<text x="385.80" y="977.50" font-size="12.7" fill="#ffff00" textLength="21.45" lengthAdjust="spacingAndGlyphs">0.6</text>
<text x="489.80" y="977.50" font-size="12.7" fill="#ffff00" textLength="21.45" lengthAdjust="spacingAndGlyphs">0.8</text>
<text x="593.80" y="977.50" font-size="12.7" fill="#ffff00" textLength="8.58" lengthAdjust="spacingAndGlyphs">1</text>
<text x="641.24" y="977.50" font-size="12.7" fill="#ffff00" textLength="45.67" lengthAdjust="spacingAndGlyphs">s [mm]</text>
<text x="88.49" y="521.75" font-size="20.7" fill="#00ff00" textLength="224.88" lengthAdjust="spacingAndGlyphs">Kraft-Weg-Diagramm</text>
<text x="304.87" y="562.75" font-size="11.2" fill="#ff00ff" textLength="59.04" lengthAdjust="spacingAndGlyphs">Fc=330.9</text>
<text x="239.87" y="589.00" font-size="11.2" fill="#00ffff" textLength="59.99" lengthAdjust="spacingAndGlyphs">Fn=308.8</text>
<text x="135.87" y="700.00" font-size="11.2" fill="#00ff00" textLength="60.32" lengthAdjust="spacingAndGlyphs">F2=212.9</text>
<text x="83.84" y="818.00" font-size="11.2" fill="#c0c0c0" textLength="60.55" lengthAdjust="spacingAndGlyphs">F1=110.6</text>
<text x="928.52" y="507.50" font-size="21.0" fill="#00ff00" textLength="229.37" lengthAdjust="spacingAndGlyphs">Goodman-Diagramm</text>
</g>
<g>
<text x="23.07" y="16.50" font-size="11.6" fill="#ffffff" textLength="28.80" lengthAdjust="spacingAndGlyphs" font-weight="bold">FED4</text>
<text x="56.32" y="16.50" font-size="11.6" fill="#ffffff" textLength="4.80" lengthAdjust="spacingAndGlyphs" font-weight="bold">-</text>
<text x="67.98" y="16.50" font-size="11.6" fill="#ffffff" textLength="129.02" lengthAdjust="spacingAndGlyphs" font-weight="bold">Tellerfederberechnung</text>
<text x="202.52" y="16.50" font-size="11.6" fill="#ffffff" textLength="4.80" lengthAdjust="spacingAndGlyphs" font-weight="bold">-</text>
<text x="213.43" y="16.50" font-size="11.6" fill="#ffffff" textLength="62.43" lengthAdjust="spacingAndGlyphs" font-weight="bold">562413.fd4</text>
<text x="8.62" y="36.00" font-size="11.6" fill="#000000" textLength="25.66" lengthAdjust="spacingAndGlyphs"><tspan text-decoration="underline">D</tspan>atei</text>
<text x="45.87" y="36.00" font-size="11.6" fill="#000000" textLength="53.12" lengthAdjust="spacingAndGlyphs"><tspan text-decoration="underline">B</tspan>earbeiten</text>
<text x="110.70" y="36.00" font-size="11.6" fill="#000000" textLength="34.68" lengthAdjust="spacingAndGlyphs"><tspan text-decoration="underline">A</tspan>nsicht</text>
<text x="157.49" y="36.00" font-size="11.6" fill="#000000" textLength="21.73" lengthAdjust="spacingAndGlyphs"><tspan text-decoration="underline">C</tspan>AD</text>
<text x="189.63" y="36.00" font-size="11.6" fill="#000000" textLength="52.90" lengthAdjust="spacingAndGlyphs">Datenban<tspan text-decoration="underline">k</tspan></text>
<text x="253.65" y="36.00" font-size="11.6" fill="#000000" textLength="48.18" lengthAdjust="spacingAndGlyphs">D<tspan text-decoration="underline">o</tspan>kument</text>
<text x="314.05" y="36.00" font-size="11.6" fill="#000000" textLength="20.07" lengthAdjust="spacingAndGlyphs"><tspan text-decoration="underline">O</tspan>LE</text>
<text x="344.89" y="36.00" font-size="11.6" fill="#000000" textLength="21.60" lengthAdjust="spacingAndGlyphs"><tspan text-decoration="underline">H</tspan>ilfe</text>
<text x="13.90" y="1011.60" font-size="7.6" fill="#c0c0c0" textLength="610.80" lengthAdjust="spacingAndGlyphs" stroke="#c0c0c0" stroke-width="0.18">26.06.2013 17:57 - HEXAGON FED4 V6.0 #0076 - FLR Industrielle  Liege - C:\VOL3\APPS\TP\TRAIN\562413.fd4</text>
</g>
</g>

</svg></body></html>
